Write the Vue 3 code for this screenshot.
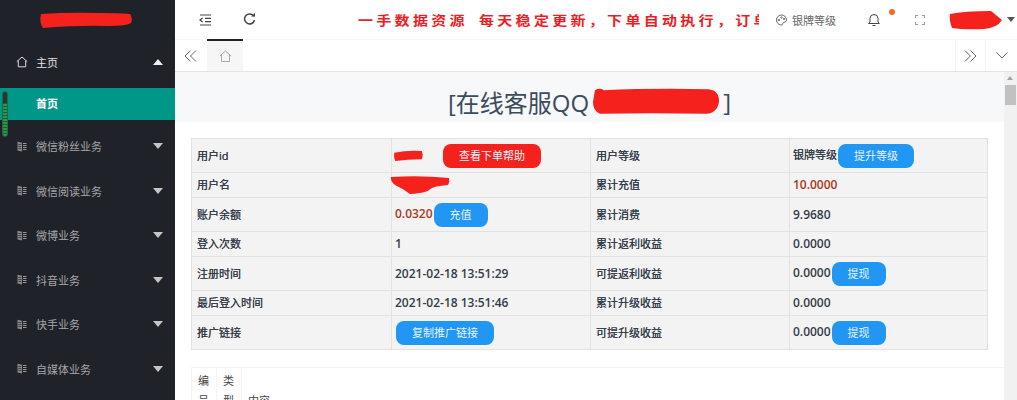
<script setup>
const menus = ['微信粉丝业务', '微信阅读业务', '微博业务', '抖音业务', '快手业务', '自媒体业务']
</script>

<template>
  <div class="layout">
    <aside class="side">
      <div class="logo">
        <svg width="94" height="17" viewBox="0 0 94 17"><path d="M2 2 Q30 0 60 1 Q80 1 91 2 Q94 6 92 11 Q88 14 70 14 Q40 13 4 16 Q0 10 2 2Z" fill="#f5211c" /></svg>
      </div>
      <div class="menu open">
        <svg class="micon" width="12" height="12" viewBox="0 0 12 12" fill="none" stroke="#ddd"><path d="M.8 5.6 6 1l5.2 4.6M2.300 4.600v6.200h7.400V4.600" /></svg>
        <span>主页</span>
        <i class="caret up"></i>
      </div>
      <div class="child">首页</div>
      <div v-for="m in menus" :key="m" class="menu">
        <svg class="micon" width="10" height="11" viewBox="0 0 10 11" fill="none"><path d="M.5.800l4.500 1V10.500L.5 9.500z" fill="#888" /><path d="M1.300 3.500h3M1.300 5.500h3M1.300 7.500h3" stroke="#20222a" stroke-width=".7" /><path d="M6 2.500h3.500M6 4.500h3.500M6 6.500h3.500M6 8.500h3.500" stroke="#999" /></svg>
        <span>{{ m }}</span>
        <i class="caret"></i>
      </div>
      <div class="meter"></div>
    </aside>

    <main class="main">
      <header class="top">
        <div class="tools">
          <svg width="13" height="12" viewBox="0 0 13 12" fill="none" stroke="#444" stroke-width="1.2"><path d="M1 1h11M6 4.300h6M6 7.600h6M1 11h11M3.600 4 1 6l2.600 2" /></svg>
          <svg width="13" height="13" viewBox="0 0 13 13" fill="none" stroke="#444" stroke-width="1.5"><path d="M10.800 3.200A5 5 0 1 0 11.500 7" /><path d="M8 3.600h4V0z" fill="#444" stroke="none" /></svg>
        </div>
        <div class="notice"><span>一手数据资源 每天稳定更新，下单自动执行，订单</span></div>
        <div class="level">
          <svg width="13" height="12" viewBox="0 0 12 12" fill="none" stroke="#666"><path d="M6 1a5 5 0 1 0 0 10c1.500 0 1-1.500 1.500-2.200S11 8.500 11 6A5 5 0 0 0 6 1z" /><circle cx="3.500" cy="6" r=".7" /><circle cx="6" cy="3.500" r=".7" /><circle cx="8.500" cy="5" r=".7" /></svg>
          银牌等级
        </div>
        <svg class="bell" width="12" height="14" viewBox="0 0 12 14" fill="none" stroke="#444"><path d="M.7 10.500h10.600L10 9V5.500a4 4 0 0 0-8 0V9zM4.500 12.500h3" /></svg>
        <i class="dot"></i>
        <svg class="full" width="10" height="10" viewBox="0 0 10 10" fill="none" stroke="#999"><path d="M.5 3V.5H3M7 .5h2.500V3M9.500 7v2.500H7M3 9.500H.500V7" /></svg>
        <svg class="user" width="54" height="20" viewBox="0 0 54 20"><path d="M1 4 Q15 1 42 1 Q48 6 53 10 Q48 18 35 19 Q15 20 3 18 Q0 10 1 4Z" fill="#f5211c" /></svg>
        <i class="ucaret"></i>
      </header>

      <nav class="tabs">
        <svg class="chev" width="13" height="12" viewBox="0 0 13 12" fill="none" stroke="#666"><path d="M6.500.5 1 6l5.500 5.500M12 .5 6.500 6l5.500 5.500" /></svg>
        <div class="home">
          <svg width="13" height="12" viewBox="0 0 13 12" fill="none" stroke="#aaa"><path d="M.8 6 6.500 1l5.700 5M2.500 5v6.500h8V5" /></svg>
        </div>
        <div class="tabs-fill"></div>
        <div class="tab-btn">
          <svg width="13" height="12" viewBox="0 0 13 12" fill="none" stroke="#666"><path d="M.8.500 6.300 6 .8 11.500M6.500.500 12 6l-5.500 5.500" /></svg>
        </div>
        <div class="tab-btn last">
          <svg width="12" height="7" viewBox="0 0 12 7" fill="none" stroke="#666"><path d="M.5.500 6 6l5.500-5.500" /></svg>
        </div>
      </nav>

      <div class="body">
        <div class="content">
          <h1 class="title">
            [在线客服QQ
            <svg width="128" height="28" viewBox="0 0 130 28"><path d="M3 3 Q8 0 12 3 Q60 1 118 2 Q129 3 129 14 Q128 26 116 27 Q60 26 8 27 Q1 24 1 15Z" fill="#f5211c" /></svg>
            ]
          </h1>
          <div class="card">
            <table class="info">
              <colgroup>
                <col style="width: 200px" /><col style="width: 199px" /><col style="width: 199px" /><col style="width: 198px" />
              </colgroup>
              <tbody>
                <tr class="tall">
                  <td>用户id</td>
                  <td class="val flush">
                    <svg class="blob" width="31" height="11" viewBox="0 0 33 12"><path d="M1 3 Q15 0 31 1 Q33 6 31 10 Q15 10 2 12 Q0 8 1 3Z" fill="#f5211c" /></svg>
                    <button class="btn red">查看下单帮助</button>
                  </td>
                  <td>用户等级</td>
                  <td class="val plain">银牌等级<button class="btn wide">提升等级</button></td>
                </tr>
                <tr>
                  <td>用户名</td>
                  <td class="val flush">
                    <svg class="name-blob" width="60" height="20" viewBox="0 0 60 20"><path d="M1 2 Q30 0 59 3 Q60 7 58 10 Q44 11 40 14 Q38 18 20 19 Q14 14 5 10 Q0 6 1 2Z" fill="#f5211c" /></svg>
                  </td>
                  <td>累计充值</td>
                  <td class="val money">10.0000</td>
                </tr>
                <tr class="tall">
                  <td>账户余额</td>
                  <td class="val"><span class="money">0.0320</span><button class="btn short">充值</button></td>
                  <td>累计消费</td>
                  <td class="val">9.9680</td>
                </tr>
                <tr>
                  <td>登入次数</td>
                  <td class="val">1</td>
                  <td>累计返利收益</td>
                  <td class="val">0.0000</td>
                </tr>
                <tr class="tall">
                  <td>注册时间</td>
                  <td class="val">2021-02-18 13:51:29</td>
                  <td>可提返利收益</td>
                  <td class="val">0.0000<button class="btn short">提现</button></td>
                </tr>
                <tr>
                  <td>最后登入时间</td>
                  <td class="val">2021-02-18 13:51:46</td>
                  <td>累计升级收益</td>
                  <td class="val">0.0000</td>
                </tr>
                <tr class="tall">
                  <td>推广链接</td>
                  <td class="val"><button class="btn copy">复制推广链接</button></td>
                  <td>可提升级收益</td>
                  <td class="val">0.0000<button class="btn short">提现</button></td>
                </tr>
              </tbody>
            </table>

            <table class="notice-list">
              <thead>
                <tr>
                  <th class="narrow">编号</th>
                  <th class="narrow">类型</th>
                  <th>内容</th>
                </tr>
              </thead>
            </table>
          </div>
        </div>
        <div class="bar">
          <i class="arrow"></i>
          <div class="thumb"></div>
        </div>
      </div>
    </main>
  </div>
</template>

<style>
html, body {
  margin: 0;
  overflow: hidden;
}
</style>

<style scoped>
.layout {
  display: flex;
  width: 1017px;
  height: 400px;
  overflow: hidden;
  font-family: "Open Sans", "Noto Sans CJK SC", sans-serif;
  font-size: 11px;
  color: #333c48;
  background: #fff;
}

.side {
  position: relative;
  width: 175px;
  flex: none;
  background: #20222a;
  color: #a5a6a8;
}

.logo {
  height: 40px;
  display: flex;
  align-items: center;
  padding: 0 0 0 39px;
  box-sizing: border-box;
}

.menu {
  height: 44.5px;
  display: flex;
  align-items: center;
  padding: 0 12px 0 17px;
  gap: 9px;
  box-sizing: border-box;
}

.menu.open {
  height: 44px;
  padding-left: 16px;
  gap: 8px;
  color: #e4e4e4;
}

.micon {
  flex: none;
}

.caret {
  margin-left: auto;
  width: 0;
  height: 0;
  border-left: 5.500px solid transparent;
  border-right: 5.500px solid transparent;
  border-top: 6px solid #c5c5c5;
}

.caret.up {
  border-top: 0;
  border-bottom: 6px solid #eee;
}

.child {
  height: 32px;
  margin: 4px 0;
  line-height: 32px;
  padding-left: 36px;
  background: #009688;
  color: #fff;
  font-weight: 600;
}

.meter {
  position: absolute;
  left: 2px;
  top: 91px;
  width: 6px;
  height: 46px;
  border: 1px solid #3f5a45;
  border-radius: 3px;
  box-sizing: border-box;
  background: repeating-linear-gradient(#1f9d4d 0 2px, #15622f 2px 3px);
}

.meter::before {
  content: "";
  display: block;
  height: 11px;
  border-radius: 2px 2px 0 0;
  background: #123f3a;
}

.main {
  flex: 1;
  min-width: 0;
  display: flex;
  flex-direction: column;
}

.top {
  height: 40px;
  flex: none;
  display: flex;
  align-items: center;
  border-bottom: 1px solid #f6f6f6;
  box-sizing: border-box;
}

.tools {
  width: 183px;
  flex: none;
  display: flex;
  align-items: center;
  gap: 31px;
  padding-left: 24px;
  box-sizing: border-box;
}

.notice {
  width: 401px;
  flex: none;
  overflow: hidden;
  white-space: pre;
  color: #ee1c25;
  font-size: 15px;
  font-weight: 700;
  letter-spacing: 3.300px;
  word-spacing: 4px;
  line-height: 20px;
}

.notice span {
  display: inline-block;
  transform: scaleY(.85);
}

.level {
  margin-left: 16px;
  width: 70px;
  display: flex;
  align-items: center;
  gap: 4px;
  color: #666;
  white-space: nowrap;
}

.bell {
  margin-left: 23px;
}

.dot {
  width: 6px;
  height: 6px;
  margin: -16px 0 0 9px;
  border-radius: 50%;
  background: #f26b2a;
}

.full {
  margin-left: 20px;
}

.user {
  margin-left: 24px;
}

.ucaret {
  margin-left: 4px;
  width: 0;
  height: 0;
  border-left: 4px solid transparent;
  border-right: 4px solid transparent;
  border-top: 5px solid #555;
}

.tabs {
  height: 32px;
  flex: none;
  display: flex;
  align-items: center;
  border-bottom: 1px solid #e4e4e4;
  box-sizing: border-box;
}

.chev {
  margin: 0 10px 0 9px;
}

.home {
  position: relative;
  width: 36px;
  height: 31px;
  background: #f6f6f6;
  display: flex;
  align-items: center;
  justify-content: center;
}

.home::before {
  content: "";
  position: absolute;
  left: 0;
  right: 0;
  top: -1px;
  height: 2px;
  background: #222;
}

.tabs-fill {
  flex: 1;
}

.tab-btn {
  width: 30px;
  height: 31px;
  display: flex;
  align-items: center;
  justify-content: center;
  border-left: 1px solid #f6f6f6;
  box-sizing: border-box;
}

.tab-btn.last {
  width: 32px;
}

.body {
  flex: 1;
  min-height: 0;
  display: flex;
}

.content {
  flex: 1;
  min-width: 0;
  overflow: hidden;
}

.title {
  height: 50px;
  margin: 0;
  padding-top: 8px;
  box-sizing: border-box;
  display: flex;
  align-items: center;
  justify-content: center;
  gap: 3px;
  background: #f7f8f9;
  font-size: 24px;
  font-weight: 400;
  color: #3d4b5c;
  white-space: nowrap;
}

.card {
  padding: 16px 0 0 16px;
}

.info {
  width: 796px;
  table-layout: fixed;
  border-collapse: collapse;
  background: #f3f3f3;
  text-shadow: 0 0 .5px #333c48;
}

.info td {
  height: 24px;
  padding: 0 5px;
  border: 1px solid #e2e2e2;
  line-height: 14px;
  white-space: nowrap;
}

.info .tall td {
  height: 33px;
}

.info td.val {
  padding-left: 3px;
  font-size: 12px;
  font-weight: 600;
  text-shadow: none;
}

.info td.flush {
  padding-left: 1px;
}

.info td.plain {
  font-size: 11px;
  font-weight: 400;
  padding-left: 3px;
  text-shadow: 0 0 .5px #333c48;
}

.info svg {
  vertical-align: middle;
}

.name-blob {
  margin-left: -3px;
}

.money,
.info td.money {
  color: #a8381c;
}

.btn {
  height: 24px;
  padding: 0;
  border: 0;
  border-radius: 8px;
  background: #2196f3;
  color: #e8f4ff;
  font: inherit;
  font-size: 11px;
  font-weight: 400;
  line-height: 24px;
  vertical-align: middle;
  text-shadow: none;
}

.btn.red {
  width: 98px;
  margin-left: 19px;
  background: #f5211c;
}

.btn.copy {
  width: 98px;
  margin-left: 1px;
}

.btn.short {
  width: 54px;
  margin-left: 1px;
}

.btn.wide {
  width: 76px;
  margin-left: 1px;
}

.notice-list {
  margin-top: 17px;
  width: 814px;
  border-collapse: collapse;
  table-layout: fixed;
}

.notice-list th {
  padding: 3px 6px;
  border: 1px solid #f3f3f3;
  font-weight: 400;
  line-height: 20px;
  text-align: left;
  vertical-align: bottom;
  color: #444;
}

.notice-list th.narrow {
  width: 12px;
}

.bar {
  position: relative;
  width: 13px;
  flex: none;
  background: #f1f1f1;
}

.arrow {
  position: absolute;
  left: 3px;
  top: 4px;
  width: 0;
  height: 0;
  border-left: 3.500px solid transparent;
  border-right: 3.500px solid transparent;
  border-bottom: 4px solid #a3a3a3;
}

.thumb {
  position: absolute;
  left: 1px;
  right: 1px;
  top: 13px;
  height: 20px;
  background: #c1c1c1;
}
</style>
